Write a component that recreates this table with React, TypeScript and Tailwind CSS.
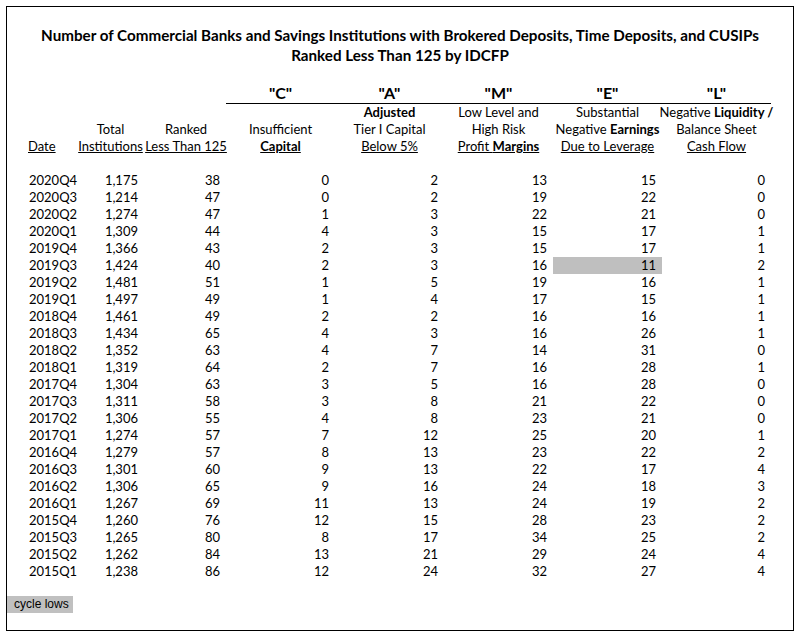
const rows: [string, string, number, number, number, number, number, number][] = [
  ["2020Q4", "1,175", 38, 0, 2, 13, 15, 0],
  ["2020Q3", "1,214", 47, 0, 2, 19, 22, 0],
  ["2020Q2", "1,274", 47, 1, 3, 22, 21, 0],
  ["2020Q1", "1,309", 44, 4, 3, 15, 17, 1],
  ["2019Q4", "1,366", 43, 2, 3, 15, 17, 1],
  ["2019Q3", "1,424", 40, 2, 3, 16, 11, 2],
  ["2019Q2", "1,481", 51, 1, 5, 19, 16, 1],
  ["2019Q1", "1,497", 49, 1, 4, 17, 15, 1],
  ["2018Q4", "1,461", 49, 2, 2, 16, 16, 1],
  ["2018Q3", "1,434", 65, 4, 3, 16, 26, 1],
  ["2018Q2", "1,352", 63, 4, 7, 14, 31, 0],
  ["2018Q1", "1,319", 64, 2, 7, 16, 28, 1],
  ["2017Q4", "1,304", 63, 3, 5, 16, 28, 0],
  ["2017Q3", "1,311", 58, 3, 8, 21, 22, 0],
  ["2017Q2", "1,306", 55, 4, 8, 23, 21, 0],
  ["2017Q1", "1,274", 57, 7, 12, 25, 20, 1],
  ["2016Q4", "1,279", 57, 8, 13, 23, 22, 2],
  ["2016Q3", "1,301", 60, 9, 13, 22, 17, 4],
  ["2016Q2", "1,306", 65, 9, 16, 24, 18, 3],
  ["2016Q1", "1,267", 69, 11, 13, 24, 19, 2],
  ["2015Q4", "1,260", 76, 12, 15, 28, 23, 2],
  ["2015Q3", "1,265", 80, 8, 17, 34, 25, 2],
  ["2015Q2", "1,262", 84, 13, 21, 29, 24, 4],
  ["2015Q1", "1,238", 86, 12, 24, 32, 27, 4],
];

const cols = "grid grid-cols-[68px_71px_80px_109px_109px_109px_109px_109px]";

export default function App() {
  return (
    <div className="bg-white w-[800px] h-[636px] p-[6px] text-black" style={{ fontFamily: "Lato, 'Open Sans', sans-serif" }}>
      <div className="border border-black h-[625px] pt-[18px]">
        <div className="text-center font-bold text-[15.2px] leading-[20px]">
          <div>Number of Commercial Banks and Savings Institutions with Brokered Deposits, Time Deposits, and CUSIPs</div>
          <div>Ranked Less Than 125 by IDCFP</div>
        </div>

        {/* CAMEL letters */}
        <div className={cols + " mt-[18px] text-[16px] leading-[20px] font-bold"}>
          <div className="col-span-3" />
          <div className="col-span-5 grid grid-cols-5 border-b border-black">
            <div className="text-center">"C"</div>
            <div className="text-center">"A"</div>
            <div className="text-center">"M"</div>
            <div className="text-center">"E"</div>
            <div className="text-center">"L"</div>
          </div>
        </div>

        {/* column headers */}
        <div className={cols + " text-[13px] leading-[17px] whitespace-nowrap"}>
          <div className="flex flex-col justify-end pl-[21px]">
            <span className="underline">Date</span>
          </div>
          <div className="flex flex-col justify-end items-center">
            <span>Total</span>
            <span className="underline">Institutions</span>
          </div>
          <div className="flex flex-col justify-end items-center">
            <span>Ranked</span>
            <span className="underline">Less Than 125</span>
          </div>
          <div className="flex flex-col justify-end items-center">
            <span>Insufficient</span>
            <span className="underline font-bold">Capital</span>
          </div>
          <div className="flex flex-col justify-end items-center">
            <span className="font-bold">Adjusted</span>
            <span>Tier I Capital</span>
            <span className="underline">Below 5%</span>
          </div>
          <div className="flex flex-col justify-end items-center">
            <span>Low Level and</span>
            <span>High Risk</span>
            <span className="underline">Profit <b>Margins</b></span>
          </div>
          <div className="flex flex-col justify-end items-center">
            <span>Substantial</span>
            <span>Negative <b>Earnings</b></span>
            <span className="underline">Due to Leverage</span>
          </div>
          <div className="flex flex-col justify-end items-center">
            <span>Negative <b>Liquidity /</b></span>
            <span>Balance Sheet</span>
            <span className="underline">Cash Flow</span>
          </div>
        </div>

        {/* data */}
        <div className="mt-[17px] text-[13px] leading-[17px] whitespace-nowrap">
          {rows.map((r) => (
            <div key={r[0]} className={cols}>
              <div className="pl-[22px]">{r[0]}</div>
              <div className="text-right pr-[8px]">{r[1]}</div>
              <div className="text-right pr-[6px]">{r[2]}</div>
              <div className="text-right pr-[6px]">{r[3]}</div>
              <div className="text-right pr-[6px]">{r[4]}</div>
              <div className="text-right pr-[6px]">{r[5]}</div>
              <div className={"text-right pr-[6px]" + (r[0] === "2019Q3" ? " bg-[#bfbfbf]" : "")}>{r[6]}</div>
              <div className="text-right pr-[6px]">{r[7]}</div>
            </div>
          ))}
        </div>

        <div className="mt-[16px]">
          <div className="w-[66px] h-[17px] bg-[#c0c0c0] pl-[7px] text-[12px] leading-[17px]" style={{ fontFamily: "'Liberation Sans', Arial, sans-serif" }}>
            cycle lows
          </div>
        </div>
      </div>
    </div>
  );
}
